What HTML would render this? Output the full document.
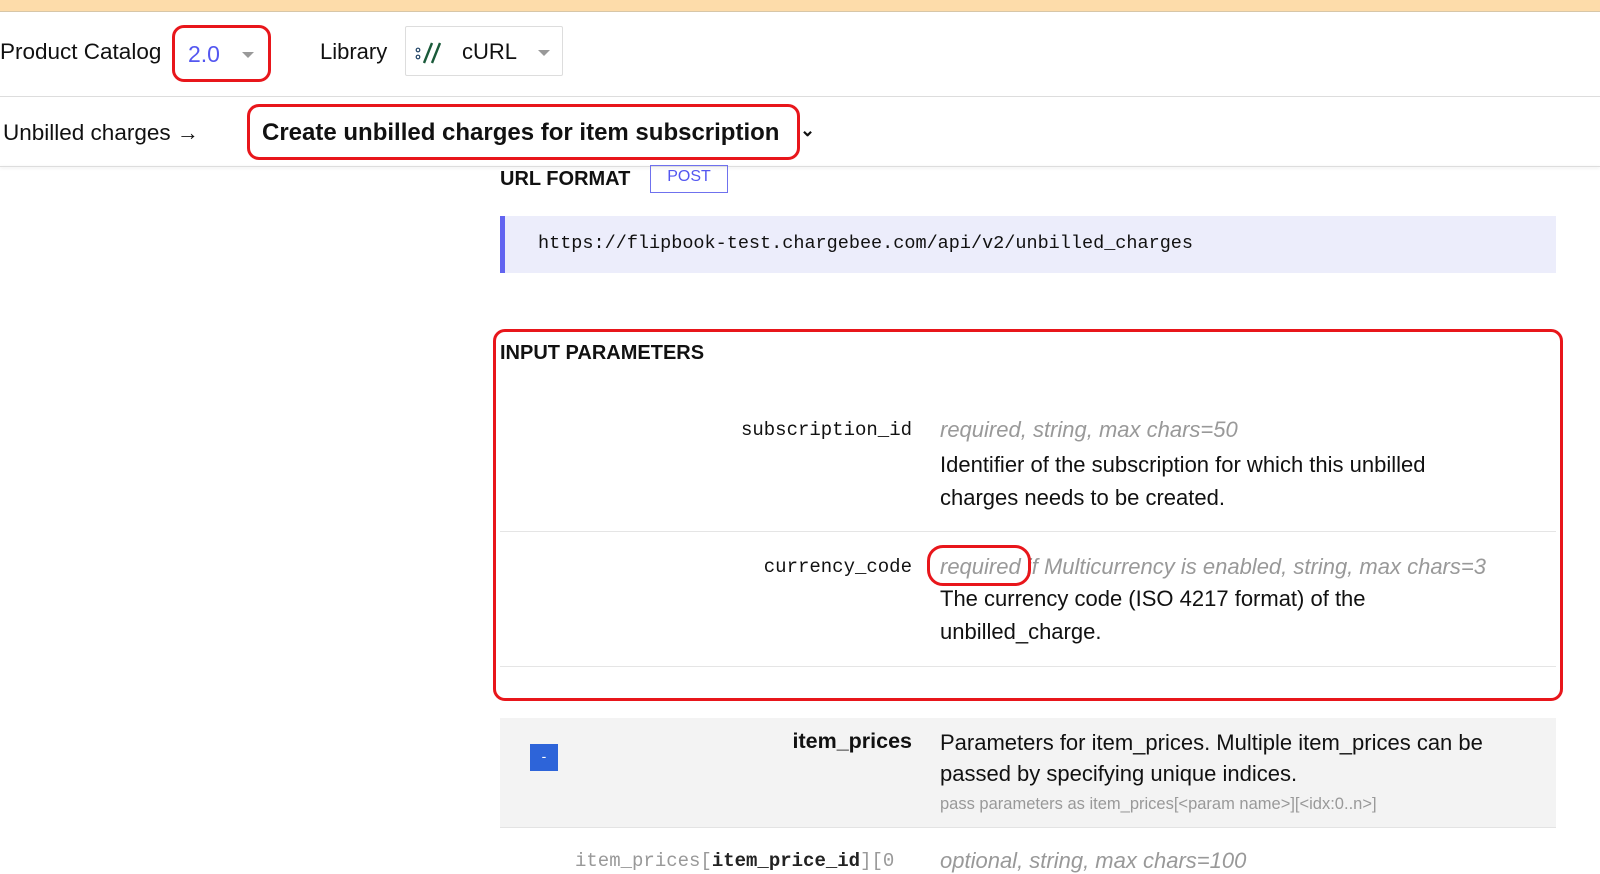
<!DOCTYPE html>
<html><head><style>
*{margin:0;padding:0;box-sizing:border-box}
body{width:1600px;height:860px;overflow:hidden;background:#fff;font-family:"Liberation Sans",sans-serif;color:#111;position:relative}
.a{position:absolute;white-space:nowrap}
.mono{font-family:"Liberation Mono",monospace}
.red{position:absolute;border:3px solid #e8161b;border-radius:12px}
.gray{color:#999;font-style:italic}
</style></head><body>
<div class="a" style="left:0;top:0;width:1600px;height:12px;background:#fddcaa;border-bottom:1px solid #d7c6a8"></div>
<div class="a" style="left:0;top:39px;font-size:22.5px">Product Catalog</div>
<div class="a" style="left:188px;top:41px;font-size:23px;color:#5457f0">2.0</div>
<div class="a" style="left:242px;top:52px;border:6px solid transparent;border-top:6px solid #999"></div>
<div class="red" style="left:172px;top:25px;width:99px;height:57px"></div>
<div class="a" style="left:320px;top:39px;font-size:22px">Library</div>
<div class="a" style="left:405px;top:26px;width:158px;height:50px;border:1px solid #ddd;border-radius:2px"></div>
<svg class="a" style="left:414px;top:40px" width="32" height="26" viewBox="0 0 32 26"><circle cx="4" cy="10" r="1.8" fill="none" stroke="#246" stroke-width="1.2"/><circle cx="4" cy="17" r="1.8" fill="none" stroke="#246" stroke-width="1.2"/><path d="M18 3L10 23M26 3L18 23" stroke="#1a5a3a" stroke-width="2.4"/></svg>
<div class="a" style="left:462px;top:39px;font-size:22px">cURL</div>
<div class="a" style="left:538px;top:50px;border:6px solid transparent;border-top:6px solid #999"></div>
<div class="a" style="left:0;top:96px;width:1600px;height:1px;background:#ddd"></div>
<div class="a" style="left:0;top:166px;width:1600px;height:1px;background:#ddd;box-shadow:0 1px 3px #ddd"></div>
<div class="a" style="left:3px;top:120px;font-size:22.5px">Unbilled charges <span style="font-size:22px">→</span></div>
<div class="a" style="left:262px;top:119px;font-size:24px;font-weight:bold">Create unbilled charges for item subscription</div>
<div class="a" style="left:800px;top:120px;font-size:18px;font-weight:bold">⌄</div>
<div class="red" style="left:247px;top:104px;width:553px;height:56px"></div>
<div class="a" style="left:500px;top:168px;font-size:20px;font-weight:bold">URL FORMAT</div>
<div class="a" style="left:650px;top:165px;width:78px;height:28px;border:1px solid #6f71ee;color:#5457f0;font-size:16px;text-align:center;line-height:22px">POST</div>
<div class="a" style="left:500px;top:216px;width:1056px;height:57px;background:#ecedfb;border-left:5px solid #6264f0"></div>
<div class="a mono" style="left:538px;top:233px;font-size:18.5px">https://flipbook-test.chargebee.com/api/v2/unbilled_charges</div>
<div class="red" style="left:493px;top:329px;width:1070px;height:372px"></div>
<div class="a" style="left:500px;top:342px;font-size:20px;font-weight:bold">INPUT PARAMETERS</div>
<div class="a mono" style="left:500px;top:419px;width:412px;text-align:right;font-size:19px">subscription_id</div>
<div class="a gray" style="left:940px;top:417px;font-size:22px">required, string, max chars=50</div>
<div class="a" style="left:940px;top:448px;font-size:22px;line-height:33px">Identifier of the subscription for which this unbilled<br>charges needs to be created.</div>
<div class="a" style="left:500px;top:531px;width:1056px;height:1px;background:#e5e5e5"></div>
<div class="a mono" style="left:500px;top:556px;width:412px;text-align:right;font-size:19px">currency_code</div>
<div class="a gray" style="left:940px;top:554px;font-size:22px">required if Multicurrency is enabled, string, max chars=3</div>
<div class="red" style="left:927px;top:545px;width:104px;height:41px;border-radius:16px"></div>
<div class="a" style="left:940px;top:582px;font-size:22px;line-height:33px">The currency code (ISO 4217 format) of the<br>unbilled_charge.</div>
<div class="a" style="left:500px;top:666px;width:1056px;height:1px;background:#e5e5e5"></div>
<div class="a" style="left:500px;top:718px;width:1056px;height:110px;background:#f3f3f3;border-bottom:1px solid #e3e3e3"></div>
<div class="a" style="left:530px;top:744px;width:28px;height:27px;background:#2d64d9;color:#fff;text-align:center;font-size:14px;line-height:25px">-</div>
<div class="a" style="left:500px;top:729px;width:412px;text-align:right;font-size:21.5px;font-weight:bold">item_prices</div>
<div class="a" style="left:940px;top:727px;font-size:22px;line-height:31px">Parameters for item_prices. Multiple item_prices can be<br>passed by specifying unique indices.</div>
<div class="a" style="left:940px;top:795px;font-size:16.5px;color:#999">pass parameters as item_prices[&lt;param name&gt;][&lt;idx:0..n&gt;]</div>
<div class="a mono" style="left:575px;top:850px;font-size:19px;color:#999">item_prices[<b style="color:#222">item_price_id</b>][0</div>
<div class="a gray" style="left:940px;top:848px;font-size:22px">optional, string, max chars=100</div>
</body></html>
